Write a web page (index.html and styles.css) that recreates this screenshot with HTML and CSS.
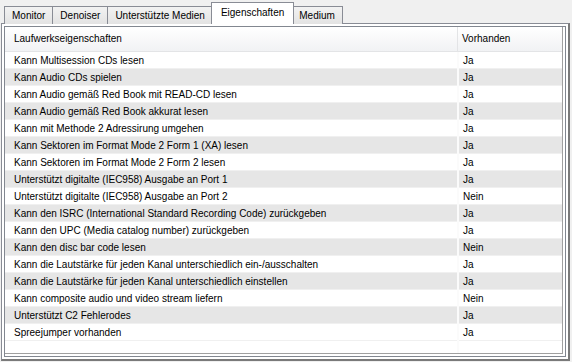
FILE: index.html
```html
<!DOCTYPE html>
<html lang="de">
<head>
    <meta charset="UTF-8">
    <title>Eigenschaften</title>
    <link rel="stylesheet" href="styles.css">
</head>
<body>
    <!-- Tabs -->
    <div class="tabbar">
        <div class="tab">Monitor</div>
        <div class="tab">Denoiser</div>
        <div class="tab">Unterstützte Medien</div>
        <div class="tab active">Eigenschaften</div>
        <div class="tab">Medium</div>
    </div>

    <!-- Tab Inhalt -->
    <div class="pane">
        <div class="list">
            <div class="head">
                <div class="hcell">Laufwerkseigenschaften</div>
                <div class="hcell">Vorhanden</div>
            </div>
            <div class="rows">
                <div class="row"><span>Kann Multisession CDs lesen</span><span>Ja</span></div>
                <div class="row"><span>Kann Audio CDs spielen</span><span>Ja</span></div>
                <div class="row"><span>Kann Audio gemäß Red Book mit READ-CD lesen</span><span>Ja</span></div>
                <div class="row"><span>Kann Audio gemäß Red Book akkurat lesen</span><span>Ja</span></div>
                <div class="row"><span>Kann mit Methode 2 Adressirung umgehen</span><span>Ja</span></div>
                <div class="row"><span>Kann Sektoren im Format Mode 2 Form 1 (XA) lesen</span><span>Ja</span></div>
                <div class="row"><span>Kann Sektoren im Format Mode 2 Form 2 lesen</span><span>Ja</span></div>
                <div class="row"><span>Unterstützt digitalte (IEC958) Ausgabe an Port 1</span><span>Ja</span></div>
                <div class="row"><span>Unterstützt digitalte (IEC958) Ausgabe an Port 2</span><span>Nein</span></div>
                <div class="row"><span>Kann den ISRC (International Standard Recording Code) zurückgeben</span><span>Ja</span></div>
                <div class="row"><span>Kann den UPC (Media catalog number) zurückgeben</span><span>Ja</span></div>
                <div class="row"><span>Kann den disc bar code lesen</span><span>Nein</span></div>
                <div class="row"><span>Kann die Lautstärke für jeden Kanal unterschiedlich ein-/ausschalten</span><span>Ja</span></div>
                <div class="row"><span>Kann die Lautstärke für jeden Kanal unterschiedlich einstellen</span><span>Ja</span></div>
                <div class="row"><span>Kann composite audio und video stream liefern</span><span>Nein</span></div>
                <div class="row"><span>Unterstützt C2 Fehlerodes</span><span>Ja</span></div>
                <div class="row"><span>Spreejumper vorhanden</span><span>Ja</span></div>
                <div class="row empty"><span></span><span></span></div>
            </div>
        </div>
    </div>
</body>
</html>
```

FILE: styles.css
```css
* { margin: 0; padding: 0; box-sizing: border-box; }
body { width: 572px; height: 362px; background: #f0f0f0; font-family: "Liberation Sans", Arial, sans-serif; font-size: 10px; color: #000; overflow: hidden; }

.tabbar { display: flex; align-items: flex-end; height: 23px; padding-left: 4px; position: relative; z-index: 1; }
.tab { height: 18px; line-height: 17px; padding: 0 7px; margin-bottom: -1px; border: 1px solid #898c95; border-bottom: none; border-left: none; background: linear-gradient(#f2f2f2, #e3e3e3); }
.tab:first-child { border-left: 1px solid #898c95; }
.tab.active { height: 22px; line-height: 19px; padding: 0 9px; margin: 0 -2px -1px -2px; border-left: 1px solid #898c95; background: #fff; position: relative; z-index: 2; }

.pane { margin-left: 1px; width: 569px; height: 338px; border: 1px solid #898c95; border-right: 2px solid #7a7a7a; border-bottom: 2px solid #7a7a7a; background: #fff; padding: 2px; }
.list { height: 100%; border: 1px solid #828790; box-shadow: inset -2px -2px 0 #fff, inset -3px -3px 0 #a0a0a0; padding: 0 3px 3px 0; display: flex; flex-direction: column; }

.head { display: grid; grid-template-columns: 452px 1fr; height: 25px; background: linear-gradient(#ffffff, #f1f2f4); border-bottom: 1px solid #e3e4e6; }
.hcell { padding-left: 9px; line-height: 24px; }
.hcell + .hcell { border-left: 1px solid #e3e4e6; padding-left: 4px; }

.rows { flex: 1; display: flex; flex-direction: column; }
.row { display: grid; grid-template-columns: 452px 1fr; height: 17px; border-bottom: 1px solid #f0f0f0; }
.row:nth-child(even) { background: #e6e6e6; }
.row span { line-height: 18px; padding-left: 9px; white-space: nowrap; }
.row span + span { border-left: 2px solid #fbfbfb; padding-left: 4px; }
.row.empty { flex: 1; border-bottom: none; background: #fff; }
```
